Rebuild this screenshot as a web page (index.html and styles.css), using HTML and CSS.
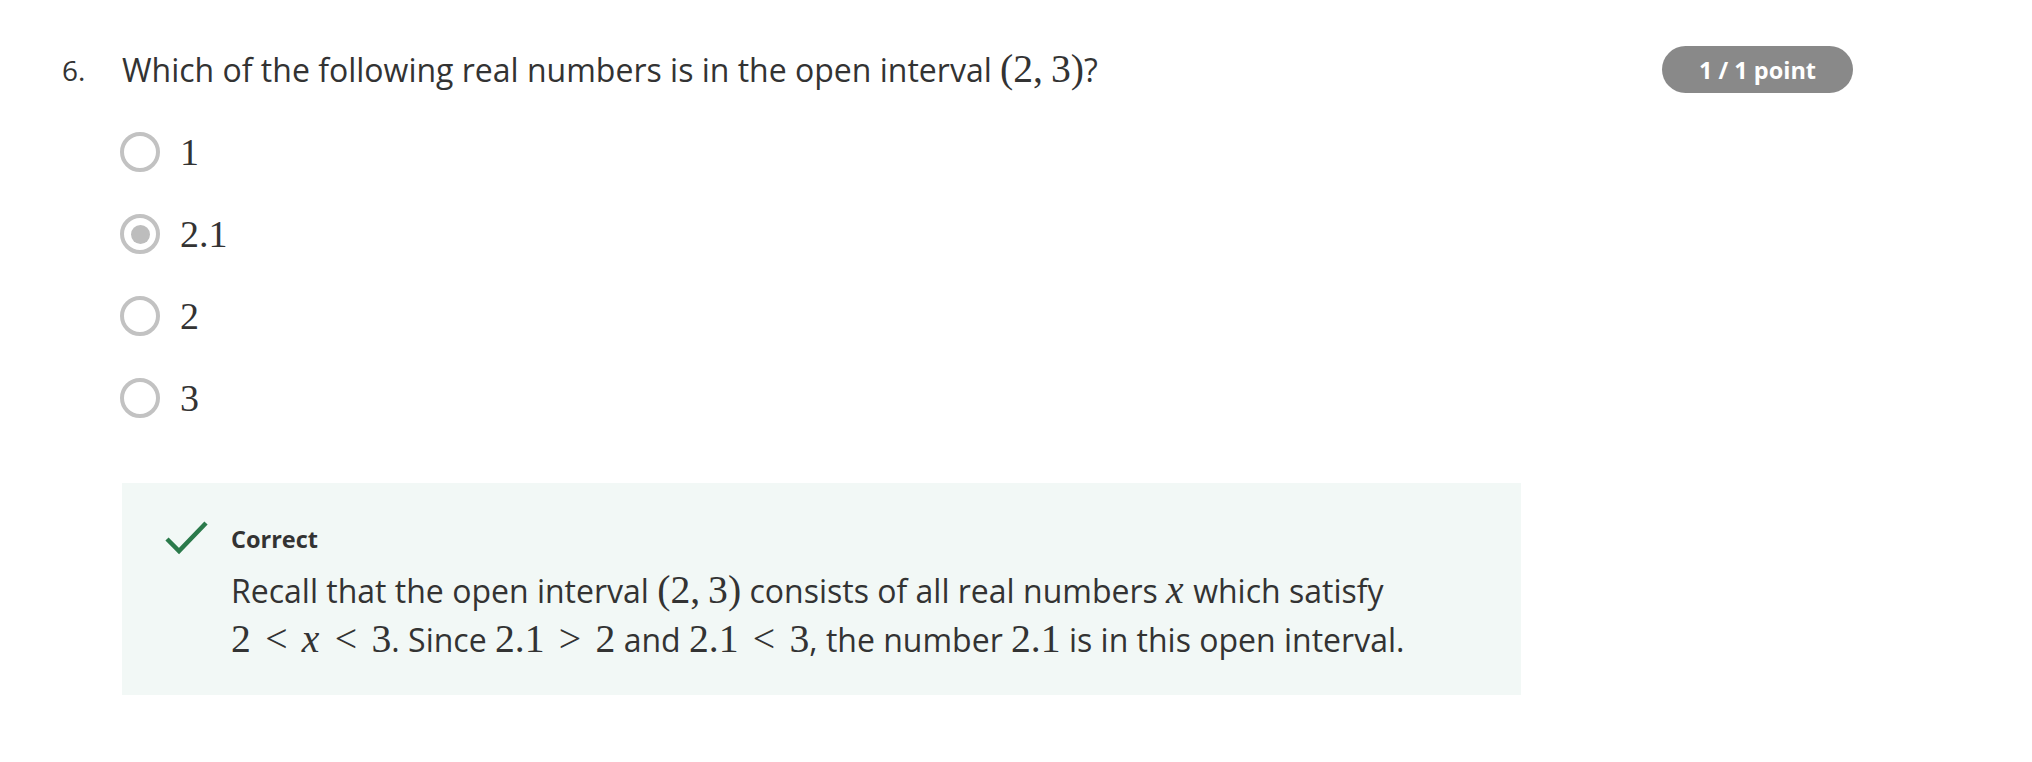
FILE: index.html
```html
<!DOCTYPE html>
<html lang="en">
<head>
<meta charset="utf-8">
<title>Question 6</title>
<link rel="stylesheet" href="styles.css">
</head>
<body>
<div class="question">
  <div class="qnum">6.</div>
  <div class="qbody">
    <div class="prompt">Which of the following real numbers is in the open interval <span class="math">(2,<span class="thin"></span>3)</span>?</div>
    <div class="options">
      <div class="option"><span class="radio"></span><span class="math opt">1</span></div>
      <div class="option"><span class="radio checked"></span><span class="math opt">2.1</span></div>
      <div class="option"><span class="radio"></span><span class="math opt">2</span></div>
      <div class="option"><span class="radio"></span><span class="math opt">3</span></div>
    </div>
    <div class="feedback">
      <svg class="check" width="44" height="36" viewBox="0 0 44 36" aria-hidden="true">
        <polyline points="2,19 14,31 41,3" fill="none" stroke="#2b7a4b" stroke-width="4.5" stroke-linecap="butt" stroke-linejoin="miter"/>
      </svg>
      <div class="fb-content">
        <div class="fb-title">Correct</div>
        <div class="fb-text">Recall that the open interval <span class="math">(2,<span class="thin"></span>3)</span> consists of all real numbers <span class="math"><i>x</i></span> which satisfy<br><span class="math">2<span class="rel">&lt;</span><i>x</i><span class="rel">&lt;</span>3</span>. Since <span class="math">2.1<span class="rel">&gt;</span>2</span> and <span class="math">2.1<span class="rel">&lt;</span>3</span>, the number <span class="math">2.1</span> is in this open interval.</div>
      </div>
    </div>
  </div>
  <div class="badge">1 / 1 point</div>
</div>
</body>
</html>
```

FILE: styles.css
```css
html, body {
  margin: 0;
  padding: 0;
  background: #ffffff;
}
body {
  font-family: "Open Sans", "Noto Sans", sans-serif;
  color: #333333;
}
.question {
  display: flex;
  align-items: flex-start;
  width: 1791px;
  padding-left: 62px;
  padding-top: 50px;
}
.qnum {
  width: 60px;
  flex: none;
  font-size: 28px;
  line-height: 40px;
}
.qbody {
  width: 1399px;
  flex: none;
}
.prompt {
  font-size: 32px;
  line-height: 40px;
}
.math {
  font-family: "Liberation Serif", "DejaVu Serif", serif;
  font-size: 1.24em;
  line-height: 1;
}
.math i {
  font-style: italic;
  margin-right: 0.03em;
}
.thin {
  display: inline-block;
  width: 0.2em;
}
.rel {
  margin: 0 0.36em;
}
.options {
  margin-top: 42px;
  display: flex;
  flex-direction: column;
  gap: 42px;
}
.option {
  display: flex;
  align-items: center;
  height: 40px;
}
.radio {
  box-sizing: border-box;
  width: 40px;
  height: 40px;
  border: 4px solid #c2c2c2;
  border-radius: 50%;
  margin-left: -2px;
  margin-right: 20px;
  display: flex;
  align-items: center;
  justify-content: center;
  flex: none;
}
.radio.checked::after {
  content: "";
  width: 19px;
  height: 19px;
  border-radius: 50%;
  background: #bdbdbd;
}
.opt {
  font-size: 38px;
  line-height: 40px;
  color: #333333;
}
.feedback {
  margin-top: 65px;
  background: #f2f8f6;
  display: flex;
  align-items: flex-start;
  padding: 41px 40px 31px 43px;
}
.check {
  flex: none;
  margin-top: -4px;
  margin-right: 22px;
}
.fb-title {
  font-size: 23.5px;
  font-weight: 700;
  line-height: 30px;
}
.fb-text {
  margin-top: 12px;
  font-size: 32px;
  line-height: 49px;
}
.badge {
  margin-left: auto;
  margin-top: -4px;
  width: 191px;
  height: 47px;
  border-radius: 24px;
  background: #898989;
  color: #ffffff;
  font-size: 23.5px;
  font-weight: 700;
  display: flex;
  align-items: center;
  justify-content: center;
}
```
